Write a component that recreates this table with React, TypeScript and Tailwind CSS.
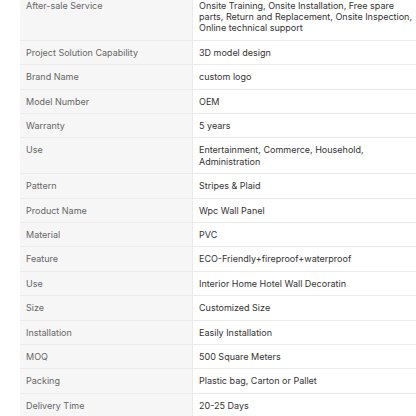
const rows: [string, string][] = [
  ['After-sale Service', 'Onsite Training, Onsite Installation, Free spare parts, Return and Replacement, Onsite Inspection, Online technical support'],
  ['Project Solution Capability', '3D model design'],
  ['Brand Name', 'custom logo'],
  ['Model Number', 'OEM'],
  ['Warranty', '5 years'],
  ['Use', 'Entertainment, Commerce, Household, Administration'],
  ['Pattern', 'Stripes & Plaid'],
  ['Product Name', 'Wpc Wall Panel'],
  ['Material', 'PVC'],
  ['Feature', 'ECO-Friendly+fireproof+waterproof'],
  ['Use', 'Interior Home Hotel Wall Decoratin'],
  ['Size', 'Customized Size'],
  ['Installation', 'Easily Installation'],
  ['MOQ', '500 Square Meters'],
  ['Packing', 'Plastic bag, Carton or Pallet'],
  ['Delivery Time', '20-25 Days'],
];

export default function App() {
  return (
    <div className="h-[416px] w-[416px] overflow-hidden bg-white font-['Inter',sans-serif] text-[9px] leading-[11.4px]">
      <div className="-mt-[6.5px] ml-[20px] w-[430px]">
        {rows.map(([label, value], i) => (
          <div key={i} className="flex border-b border-[#ebebeb]">
            <div className="w-[173px] shrink-0 border-r border-[#ebebeb] bg-[#f6f6f6] px-[6px] py-[6px] text-[#666]">
              {label}
            </div>
            <div className="w-[226px] px-[6px] py-[6px] text-[#333]">{value}</div>
          </div>
        ))}
      </div>
    </div>
  );
}
